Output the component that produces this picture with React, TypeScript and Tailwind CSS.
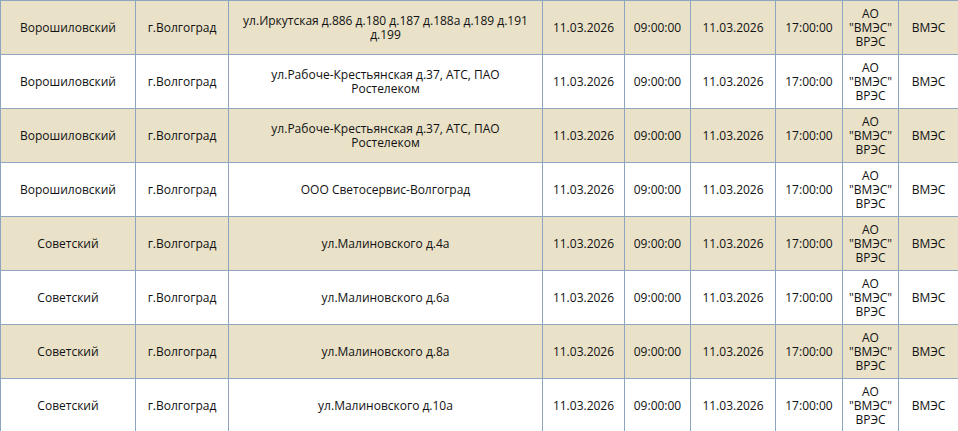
const rows = [
  { district: "Ворошиловский", addr: "ул.Иркутская д.886 д.180 д.187 д.188а д.189 д.191 д.199", shaded: true },
  { district: "Ворошиловский", addr: "ул.Рабоче-Крестьянская д.37, АТС, ПАО Ростелеком", shaded: false },
  { district: "Ворошиловский", addr: "ул.Рабоче-Крестьянская д.37, АТС, ПАО Ростелеком", shaded: true },
  { district: "Ворошиловский", addr: "ООО Светосервис-Волгоград", shaded: false },
  { district: "Советский", addr: "ул.Малиновского д.4а", shaded: true },
  { district: "Советский", addr: "ул.Малиновского д.6а", shaded: false },
  { district: "Советский", addr: "ул.Малиновского д.8а", shaded: true },
  { district: "Советский", addr: "ул.Малиновского д.10а", shaded: false },
];

const cell = "border border-[#8ea4bf] px-1 text-center align-middle";

export default function App() {
  return (
    <div className="w-[958px] h-[431px] overflow-hidden bg-white">
      <table
        className="table-fixed border-collapse w-[958px] text-[12px] leading-[14px] font-medium text-[#111]"
        style={{ fontFamily: '"Open Sans", "Noto Sans", sans-serif' }}
      >
        <colgroup>
          <col className="w-[135px]" />
          <col className="w-[93px]" />
          <col className="w-[314px]" />
          <col className="w-[82px]" />
          <col className="w-[66px]" />
          <col className="w-[85px]" />
          <col className="w-[67px]" />
          <col className="w-[56px]" />
          <col className="w-[60px]" />
        </colgroup>
        <tbody>
          {rows.map((r, i) => (
            <tr key={i} className={`h-[54px] ${r.shaded ? "bg-[#e9e1c8]" : "bg-white"}`}>
              <td className={cell}>{r.district}</td>
              <td className={cell}>г.Волгоград</td>
              <td className={`${cell} px-3`}>{r.addr}</td>
              <td className={cell}>11.03.2026</td>
              <td className={cell}>09:00:00</td>
              <td className={cell}>11.03.2026</td>
              <td className={cell}>17:00:00</td>
              <td className={cell}>
                АО
                <br />
                "ВМЭС"
                <br />
                ВРЭС
              </td>
              <td className={cell}>ВМЭС</td>
            </tr>
          ))}
        </tbody>
      </table>
    </div>
  );
}
